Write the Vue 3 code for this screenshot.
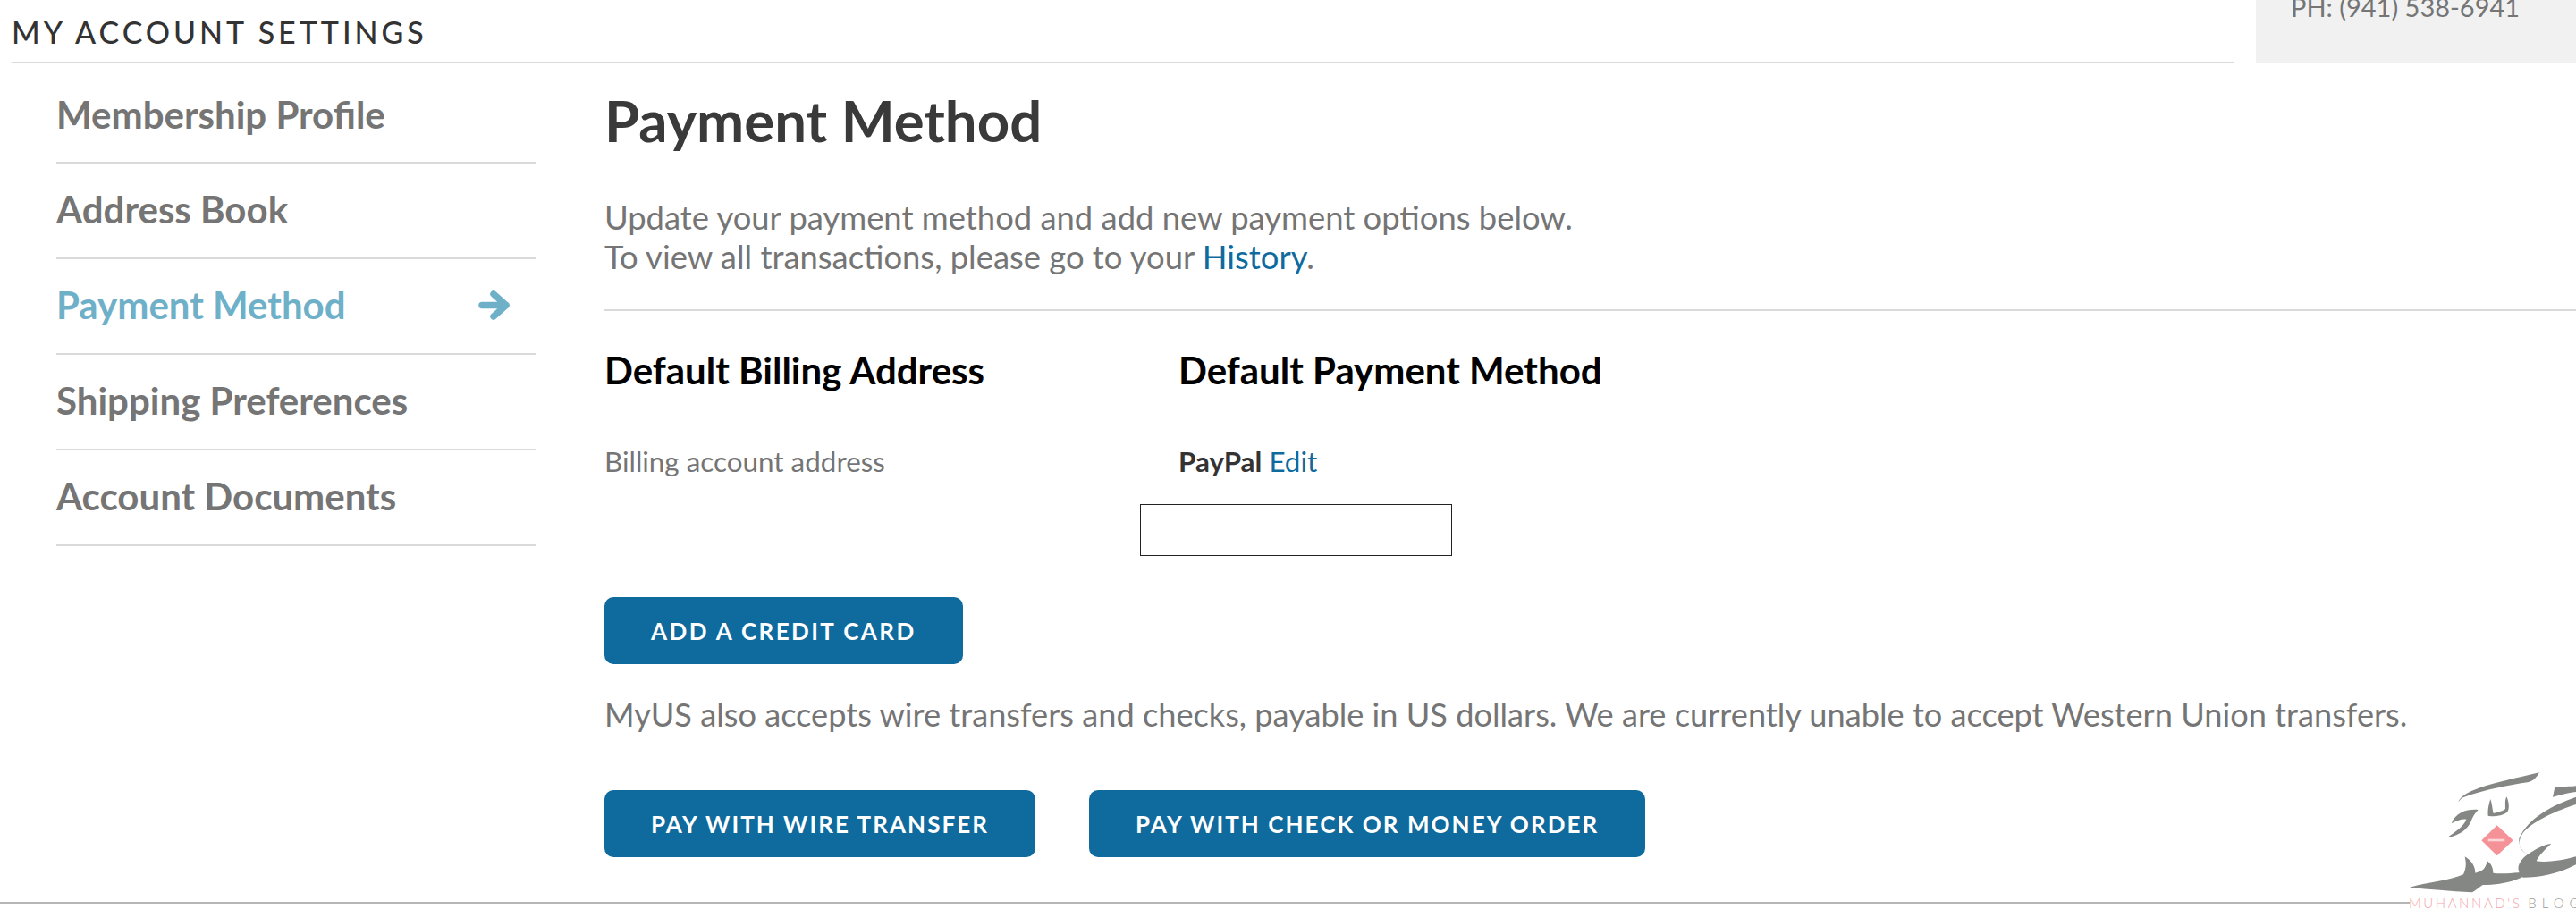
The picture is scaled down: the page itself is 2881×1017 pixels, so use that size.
<template>
  <div class="page">
    <div class="top-row">
      <div class="title-bar">
        <h2>MY ACCOUNT SETTINGS</h2>
      </div>
      <div class="contact-box">PH: (941) 538-6941</div>
    </div>

    <div class="columns">
      <nav class="side-nav">
        <a
          v-for="item in navItems"
          :key="item"
          href="#"
          class="nav-item"
          :class="{ active: item === activeItem }"
        >
          <span>{{ item }}</span>
          <svg v-if="item === activeItem" class="arrow" viewBox="0 0 35 33" width="35" height="33">
            <path d="M4 16.5H31M17 4L31 16.5L17 29" fill="none" stroke="currentColor" stroke-width="7.5" stroke-linecap="round" stroke-linejoin="round" />
          </svg>
        </a>
      </nav>

      <main class="content">
        <h1>Payment Method</h1>
        <p class="intro">
          Update your payment method and add new payment options below.<br />
          To view all transactions, please go to your <a href="#">History</a>.
        </p>
        <hr />

        <div class="defaults">
          <section class="billing">
            <h3>Default Billing Address</h3>
            <p class="small">Billing account address</p>
          </section>
          <section class="method">
            <h3>Default Payment Method</h3>
            <p class="small"><strong>PayPal</strong> <a href="#">Edit</a></p>
            <div class="empty-box"></div>
          </section>
        </div>

        <button class="btn add-card">ADD A CREDIT CARD</button>
        <p class="also">MyUS also accepts wire transfers and checks, payable in US dollars. We are currently unable to accept Western Union transfers.</p>
        <div class="actions">
          <button class="btn">PAY WITH WIRE TRANSFER</button>
          <button class="btn">PAY WITH CHECK OR MONEY ORDER</button>
        </div>
      </main>
    </div>

    <div class="bottom-line"></div>

    <div class="watermark">
      <svg viewBox="0 0 723 501" width="241" height="167">
        <g fill="#858785">
          <path d="M328 142C345 100 440 80 600 43C590 60 580 72 560 76C480 88 400 105 340 128Z" />
          <path d="M723 88C690 92 665 88 652 92L645 125C660 122 690 112 723 108Z" />
          <path d="M723 150C660 170 580 205 545 245C525 275 530 300 560 318C590 300 610 285 640 282C620 300 600 320 590 340C620 345 670 340 723 325V352C660 385 600 395 545 395C520 370 525 345 560 318C540 305 530 290 532 265C560 195 650 150 723 125Z" />
          <path d="M305 214C320 175 360 165 395 168C380 185 375 195 372 205C360 235 330 255 290 262C320 240 345 225 355 200C340 198 320 205 305 214Z" />
          <path d="M165 428C230 410 300 405 345 385C355 365 355 345 350 325C375 340 385 360 385 380C410 375 420 365 425 340C440 350 445 365 445 380C480 385 540 380 580 370C530 410 470 420 410 420C395 430 385 440 375 445C300 440 230 435 165 428Z" />
          <path d="M428 188C426 170 430 150 436 132C442 150 442 165 446 180C465 175 480 172 486 165C486 150 484 138 490 124C500 145 500 170 490 178C470 190 445 192 428 188Z" />
        </g>
        <path d="M458 220L512 271L458 322L406 271Z" fill="#f59297" />
        <rect x="428" y="266" width="56" height="8" fill="#fbd5d7" />
      </svg>
      <div class="wm-text"><span class="pink">MUHANNAD'S</span> <span class="grey">BLOG</span></div>
    </div>
  </div>
</template>

<script setup>
const navItems = [
  'Membership Profile',
  'Address Book',
  'Payment Method',
  'Shipping Preferences',
  'Account Documents',
]

const activeItem = 'Payment Method'
</script>

<style>
html,
body {
  margin: 0;
  background: #fff;
  overflow: hidden;
}
</style>

<style scoped>
.page {
  position: relative;
  width: 2881px;
  height: 1017px;
  overflow: hidden;
  font-family: Lato, "Noto Sans", sans-serif;
  color: #757575;
}
.top-row {
  display: flex;
  height: 71px;
}
.title-bar {
  width: 2485px;
  margin-left: 13px;
  border-bottom: 2px solid #dadada;
  box-sizing: border-box;
}
.title-bar h2 {
  margin: 0;
  padding-top: 17px;
  font-size: 34px;
  line-height: 38px;
  font-weight: 500;
  letter-spacing: 3.95px;
  color: #333;
}
.contact-box {
  margin-left: 25px;
  flex: 1;
  background: #f1f1f1;
  padding-left: 39px;
  font-size: 29px;
  line-height: 15px;
  height: 71px;
  overflow: hidden;
  box-sizing: border-box;
}
.columns {
  display: flex;
}
.side-nav {
  width: 537px;
  margin-left: 63px;
  flex-shrink: 0;
}
.nav-item {
  display: flex;
  justify-content: space-between;
  align-items: center;
  height: 107px;
  box-sizing: border-box;
  border-bottom: 2px solid #dadada;
  padding-right: 30px;
  padding-bottom: 3px;
  font-size: 42px;
  font-weight: 700;
  color: #757575;
  text-decoration: none;
}
.nav-item:first-child {
  height: 112px;
  padding-top: 6px;
}
.nav-item.active {
  color: #6fb0c9;
}
.content {
  flex: 1;
  margin-left: 76px;
  min-width: 0;
}
h1 {
  margin: 0;
  padding-top: 28px;
  font-size: 63.5px;
  line-height: 72px;
  font-weight: 700;
  color: #3a3a3a;
}
.intro {
  margin: 50px 0 0;
  font-size: 36.4px;
  line-height: 44px;
}
.intro a,
.small a {
  color: #0f6a9d;
  text-decoration: none;
}
hr {
  margin: 37px 0 0;
  border: 0;
  border-top: 2px solid #dadada;
}
.defaults {
  display: flex;
  padding-top: 42px;
  box-sizing: border-box;
  height: 320px;
}
.billing {
  width: 642px;
}
h3 {
  margin: 0;
  font-size: 42px;
  line-height: 48px;
  font-weight: 700;
  color: #000;
}
.small {
  margin: 60px 0 0;
  font-size: 31.4px;
  line-height: 36px;
}
.small strong {
  color: #333;
}
.empty-box {
  width: 349px;
  height: 58px;
  margin: 30px 0 0 -43px;
  box-sizing: border-box;
  border: 1px solid #222;
  background: #fff;
}
.btn {
  display: block;
  height: 75px;
  padding: 0 52px;
  border: 0;
  border-radius: 10px;
  background: #0f6a9d;
  color: #fff;
  font-family: inherit;
  font-size: 26px;
  font-weight: 700;
  letter-spacing: 2.05px;
  cursor: pointer;
}
.add-card {
  letter-spacing: 2.4px;
}
.also {
  margin: 34px 0 0;
  font-size: 36.2px;
  line-height: 44px;
}
.actions {
  display: flex;
  gap: 60px;
  margin-top: 63px;
}
.bottom-line {
  position: absolute;
  left: 0;
  right: 186px;
  top: 1009px;
  height: 2px;
  background: #b5b5b5;
}
.watermark {
  position: absolute;
  left: 2640px;
  top: 850px;
  width: 241px;
  height: 167px;
}
.wm-text {
  position: absolute;
  left: 54px;
  top: 152px;
  white-space: nowrap;
  font-size: 15px;
  line-height: 16px;
  letter-spacing: 2.6px;
  font-weight: 300;
}
.pink {
  color: #f3a6aa;
}
.grey {
  color: #9a9a9a;
  letter-spacing: 6px;
}
</style>
